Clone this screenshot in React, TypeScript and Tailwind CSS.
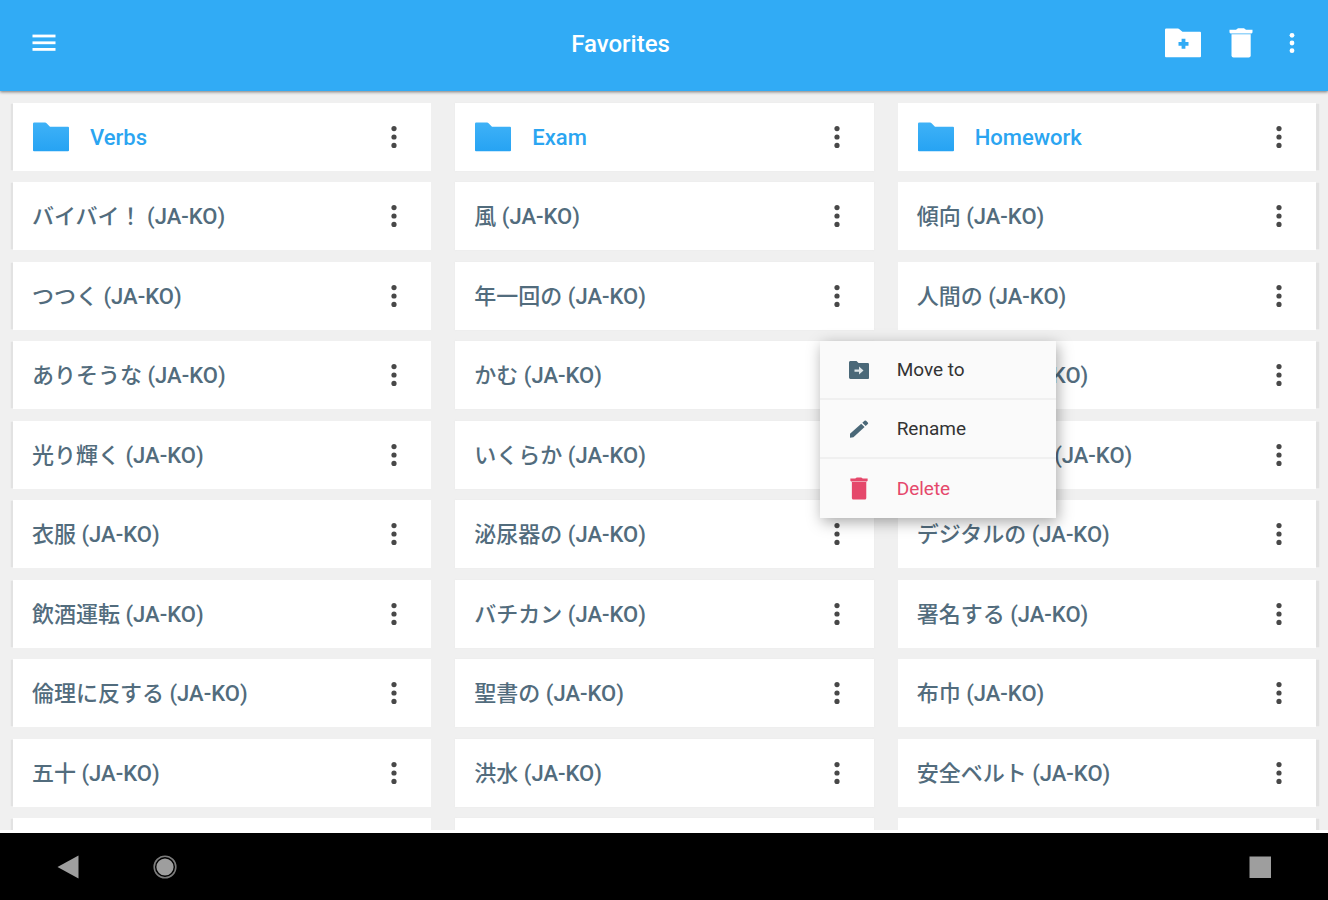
import React from "react";

type Entry = { word: string; menuOpen?: boolean };
type Column = { folder: string; shade: string; entries: Entry[] };

const columns: Column[] = [
  {
    folder: "Verbs",
    shade: "shadow-[-3px_0_1px_-1px_#e2e2e2]",
    entries: [
      { word: "バイバイ！" },
      { word: "つつく" },
      { word: "ありそうな" },
      { word: "光り輝く" },
      { word: "衣服" },
      { word: "飲酒運転" },
      { word: "倫理に反する" },
      { word: "五十" },
    ],
  },
  {
    folder: "Exam",
    shade: "shadow-[0_0_2px_#e9e9e9]",
    entries: [
      { word: "風" },
      { word: "年一回の" },
      { word: "かむ", menuOpen: true },
      { word: "いくらか" },
      { word: "泌尿器の" },
      { word: "バチカン" },
      { word: "聖書の" },
      { word: "洪水" },
    ],
  },
  {
    folder: "Homework",
    shade: "shadow-[4px_0_1px_-1px_#e2e2e2]",
    entries: [
      { word: "傾向" },
      { word: "人間の" },
      { word: "寄生虫の" },
      { word: "コンピュータ" },
      { word: "デジタルの" },
      { word: "署名する" },
      { word: "布巾" },
      { word: "安全ベルト" },
    ],
  },
];

function MenuIcon() {
  return (
    <svg className="h-5 w-6" viewBox="0 0 24 20" fill="#fff" aria-hidden="true">
      <rect x="0.5" y="1.6" width="23" height="2.8" />
      <rect x="0.5" y="8.4" width="23" height="2.8" />
      <rect x="0.5" y="15" width="23" height="2.8" />
    </svg>
  );
}

function Dots({ className }: { className: string }) {
  return (
    <svg className={className} viewBox="0 0 6 24" fill="currentColor" aria-hidden="true">
      <circle cx="3" cy="3.6" r="2.6" />
      <circle cx="3" cy="12" r="2.6" />
      <circle cx="3" cy="20.4" r="2.6" />
    </svg>
  );
}

function FolderIcon() {
  return (
    <svg className="h-[30px] w-9 shrink-0" viewBox="0 0 36 30" aria-hidden="true">
      <defs>
        <linearGradient id="folder-fill" x1="0" y1="0" x2="0" y2="1">
          <stop offset="0" stopColor="#3fb2f7" />
          <stop offset="1" stopColor="#26a3f3" />
        </linearGradient>
      </defs>
      <path
        d="M1.2 .5H12.2a1.5 1.5 0 0 1 1.1.5L17 4.7H35a1 1 0 0 1 1 1V28.3a1 1 0 0 1-1 1H1a1 1 0 0 1-1-1V1.7A1.2 1.2 0 0 1 1.2.5Z"
        fill="url(#folder-fill)"
      />
    </svg>
  );
}

function FolderPlusIcon() {
  return (
    <svg className="h-[30px] w-9" viewBox="0 0 36 30" aria-hidden="true">
      <path
        d="M1.2 .5H13a1.5 1.5 0 0 1 1.1.5L17.5 3.7H35a1 1 0 0 1 1 1V28.3a1 1 0 0 1-1 1H1a1 1 0 0 1-1-1V1.7A1.2 1.2 0 0 1 1.2.5Z"
        fill="#fff"
      />
      <path d="M18.5 10.800v10M13.500 15.800h10" stroke="#31abf5" strokeWidth="3.800" />
    </svg>
  );
}

function TrashIcon({ className }: { className: string }) {
  return (
    <svg className={className} viewBox="0 0 24 30" fill="currentColor" aria-hidden="true">
      <path d="M7 1.800 9 .3h6L17 1.800H23.500V4.600L22.500 5.600H1.500L.5 4.600V1.800Z" />
      <path d="M2.500 6.200H21.700V27.500a2 2 0 0 1-2 2H4.500a2 2 0 0 1-2-2Z" />
    </svg>
  );
}

function MoveIcon() {
  return (
    <svg className="h-[18px] w-5" viewBox="0 0 20 18" aria-hidden="true">
      <path
        d="M1.5 0H7.5l2 2H18.5A1.3 1.3 0 0 1 20 3.4V16.5A1.3 1.3 0 0 1 18.6 18H1.4A1.4 1.4 0 0 1 0 16.6V1.4A1.4 1.4 0 0 1 1.5 0Z"
        fill="#4a6878"
      />
      <path d="M5.5 8.4H10V5.6L14.5 9.6 10 13.4V10.8H5.5Z" fill="#dfe6e9" />
    </svg>
  );
}

function PencilIcon() {
  return (
    <svg className="h-[18px] w-5" viewBox="0 0 20 18" fill="#4a6878" aria-hidden="true">
      <path d="M1 13.8 12.2 3.8 15.6 7 4.4 17.2 1 17.8Z" />
      <path d="M13.3 2.8 15.5.8a1.2 1.2 0 0 1 1.6 0L18.8 2.5a1.1 1.1 0 0 1 0 1.6L16.7 6Z" />
    </svg>
  );
}

function ContextMenu() {
  const item = "flex h-[59px] w-full items-center gap-7 pl-[29px] text-left";
  return (
    <div
      role="menu"
      className="absolute top-0 left-0 z-10 w-[236px] divide-y-2 divide-[#f0f0f0] bg-[#fafafa] text-[19px] leading-6 text-[#333] shadow-[2px_4px_14px_rgba(0,0,0,0.34)]"
    >
      <button role="menuitem" className={item}>
        <MoveIcon />
        Move to
      </button>
      <button role="menuitem" className={item}>
        <PencilIcon />
        Rename
      </button>
      <button role="menuitem" className={item + " text-[#e5486b]"}>
        <span className="flex w-5 justify-center">
          <TrashIcon className="h-[23px] w-[18px]" />
        </span>
        Delete
      </button>
    </div>
  );
}

function More({ label, open }: { label: string; open?: boolean }) {
  return (
    <div className="relative h-full w-[34px] shrink-0">
      <button
        aria-label={"Options for " + label}
        className="flex h-full w-full items-center justify-center text-[#484848]"
      >
        <Dots className="h-6 w-[6px]" />
      </button>
      {open && <ContextMenu />}
    </div>
  );
}

export default function App() {
  return (
    <div className="flex h-screen flex-col overflow-hidden bg-[#f0f0f0] font-['Roboto','Noto_Sans_CJK_JP',sans-serif]">
      <header className="z-20 flex h-[91px] shrink-0 items-center bg-[#31abf5] pr-[17px] pb-[5px] pl-8 text-white shadow-[0_1px_3px_rgba(0,0,0,0.5)]">
        <button aria-label="Open navigation" className="shrink-0">
          <MenuIcon />
        </button>
        <h1 className="flex-1 pt-[2px] pl-5 text-center text-[24px] leading-7 font-medium">Favorites</h1>
        <div className="flex shrink-0 items-center">
          <button aria-label="New folder">
            <FolderPlusIcon />
          </button>
          <button aria-label="Delete" className="ml-7">
            <TrashIcon className="h-[30px] w-6" />
          </button>
          <button aria-label="More options" className="ml-5 flex w-[38px] justify-center">
            <Dots className="h-[22px] w-[6px]" />
          </button>
        </div>
      </header>

      <main className="min-h-0 flex-1 overflow-hidden pt-3 pr-3 pl-[13px]">
        <div className="grid h-[783px] grid-cols-3 gap-x-6">
          {columns.map((column) => (
            <section key={column.folder} className="flex min-w-0 flex-col justify-between">
              <div className={"flex h-[68px] items-center bg-white pr-5 pl-5 " + column.shade}>
                <FolderIcon />
                <h2 className="flex-1 pt-[2px] pl-[21px] text-[22px] leading-7 font-medium text-[#2ba5f1]">
                  {column.folder}
                </h2>
                <More label={column.folder} />
              </div>
              {column.entries.map((entry) => (
                <div
                  key={entry.word}
                  className={"flex h-[68px] items-center bg-white pr-5 pl-[19px] " + column.shade}
                >
                  <p className="flex-1 pt-[2px] text-[22px] leading-7 font-medium whitespace-nowrap text-[#526c7d]">
                    {entry.word} (JA-KO)
                  </p>
                  <More label={entry.word} open={entry.menuOpen} />
                </div>
              ))}
              <div className={"h-[68px] bg-white " + column.shade} />
            </section>
          ))}
        </div>
      </main>

      <nav
        aria-label="System"
        className="z-20 flex h-[70px] shrink-0 items-center border-t-3 border-white bg-black px-14 text-[#9e9e9e]"
      >
        <button aria-label="Back">
          <svg className="h-6 w-6" viewBox="0 0 24 24" fill="currentColor" aria-hidden="true">
            <path d="M22.5 .5V23.5L1.5 12Z" />
          </svg>
        </button>
        <button aria-label="Home" className="ml-[73px]">
          <svg className="h-6 w-6" viewBox="0 0 24 24" aria-hidden="true">
            <circle cx="12" cy="12" r="10.8" fill="none" stroke="#7c7c7c" strokeWidth="1.6" />
            <circle cx="12" cy="12" r="8.6" fill="currentColor" />
          </svg>
        </button>
        <button aria-label="Recent apps" className="ml-auto">
          <svg className="h-6 w-6" viewBox="0 0 24 24" fill="currentColor" aria-hidden="true">
            <rect x="1.5" y="1.5" width="21.5" height="21.5" />
          </svg>
        </button>
      </nav>
    </div>
  );
}
